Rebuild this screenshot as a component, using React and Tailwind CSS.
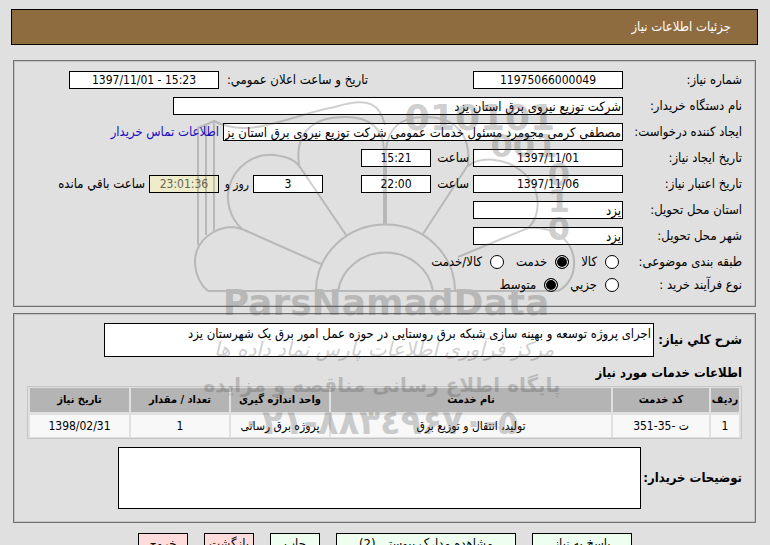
import { useState } from "react";

const FIELD =
  "h-[18px] shrink-0 border border-black bg-white px-px leading-4 outline-none";

const PANEL =
  "mr-[14px] ml-[13px] border border-[#707070] px-[13px] shadow-[inset_0_0_0_1px_#c4c4c4]";

const columns = [
  { title: "ردیف", width: "w-[28px]" },
  { title: "کد خدمت", width: "w-[96px]" },
  { title: "نام خدمت", width: "" },
  { title: "واحد اندازه گیری", width: "w-[98px]" },
  { title: "تعداد / مقدار", width: "w-[98px]" },
  { title: "تاریخ نیاز", width: "w-[99px]" },
];

const services = [
  ["1", "ت -35-351", "تولید، انتقال و توزیع برق", "پروژه برق رسانی", "1", "1398/02/31"],
];

const actions = [
  { title: "پاسخ به نیاز", style: "w-[100px] bg-[#efffef]" },
  { title: "مشاهده مدارک پیوستی (2)", style: "w-[180px] bg-[#efffef]" },
  { title: "چاپ", style: "w-[50px] bg-[#efffef]" },
  { title: "بازگشت", style: "w-[50px] bg-[#ffdcdc]" },
  { title: "خروج", style: "w-[50px] bg-[#ffdcdc]" },
];

// One line of the form, label on the right
function Row({ id, label, children }) {
  return (
    <div className="flex h-[18px] items-center">
      <label htmlFor={id} className="w-[119px] shrink-0 whitespace-nowrap">
        {label}
      </label>
      {children}
    </div>
  );
}

function Radio({ name, label, value, selected, onChange }) {
  return (
    <label className="flex items-center gap-1 whitespace-nowrap">
      <input
        type="radio"
        name={name}
        checked={selected === value}
        onChange={() => onChange(value)}
        className="me-1 size-[14px] appearance-none rounded-full border border-black bg-white checked:bg-black checked:shadow-[inset_0_0_0_1px_white]"
      />
      {label}
    </label>
  );
}

// Logo printed across the page
function Watermark() {
  return (
    <svg
      viewBox="0 0 400 370"
      aria-hidden="true"
      className="pointer-events-none absolute top-[90px] left-1/2 w-[400px] -translate-x-1/2 opacity-25"
    >
      <g transform="translate(5 0)">
        <g fill="none" stroke="#444" strokeWidth="2">
          <path d="M18 201H368" />
          <path d="M126 201a69 66 0 0 1 139 0M148 201a48 45 0 0 1 95 0" />
          <path d="M18 201C5 190 5 176 5 170C6 150 25 137 43 137L52 139L131 174" />
          <path d="M52 139C39 127 36 110 39 98C44 76 65 63 84 65C99 67 106 70 112 80L156 145" />
          <path d="M109 75C105 45 120 27 155 27C180 27 193 38 194 60V135" />
          <path d="M196 135V60C198 38 210 27 235 27C266 27 281 45 278 75L233 144" />
          <path d="M278 76C290 66 315 68 330 80C352 96 352 126 338 138" />
          <path d="M268 167L338 138C365 136 382 150 384 170C385 185 378 196 368 201" />
          <path d="M8 155V38L24 31V141M16 145V35M24 31C60 50 100 25 145 17C180 6 190 15 195 35" />
        </g>
        <g fill="#444" fontFamily="DejaVu Sans" fontWeight="bold" textAnchor="middle" direction="ltr">
          <text x="290" y="40" fontSize="36">010101</text>
          <text x="334" y="67" fontSize="32">001</text>
          <text x="369" y="96" fontSize="32">0</text>
          <text x="369" y="122" fontSize="32">1</text>
          <text x="369" y="150" fontSize="32">0</text>
          <text x="196" y="225" fontSize="36">ParsNamadData</text>
        </g>
        <g fill="#444" fontFamily="DejaVu Sans" textAnchor="middle" direction="rtl">
          <text x="194" y="266" fontSize="20" fontStyle="italic">مرکز فرآوری اطلاعات پارس نماد داده ها</text>
          <text x="192" y="302" fontSize="20" fontWeight="bold">پایگاه اطلاع رسانی مناقصه و مزایده</text>
          <text x="190" y="344" fontSize="34" fontWeight="bold" direction="ltr">۰۲۱-۸۸۳٤۹۶۷۰-۵</text>
        </g>
      </g>
    </svg>
  );
}

function App() {
  const [category, setCategory] = useState("service");
  const [process, setProcess] = useState("medium");

  return (
    <div
      dir="rtl"
      className="relative min-h-screen overflow-hidden bg-[#e0e0e0] pt-[9px] font-['DejaVu_Sans_Condensed','DejaVu_Sans',sans-serif] text-[13px] leading-4 text-black"
    >
      <h1 className="mr-3 ml-[11px] flex h-9 items-center border border-black bg-[#8f6c40] px-[26px] text-white">
        جزئیات اطلاعات نیاز
      </h1>

      {/* Need info */}
      <section className={`${PANEL} mt-[15px] flex flex-col gap-2 pt-[10px] pb-3`}>
        <Row id="number" label="شماره نیاز:">
          <input id="number" readOnly defaultValue="11975066000049" className={`${FIELD} w-[150px] text-center text-[12px]`} />
          <label htmlFor="announced" className="ms-[105px] w-[149px] whitespace-nowrap">
            تاریخ و ساعت اعلان عمومي:
          </label>
          <input id="announced" dir="ltr" readOnly defaultValue="1397/11/01 - 15:23" className={`${FIELD} w-[150px] text-center text-[12px]`} />
        </Row>
        <Row id="buyer" label="نام دستگاه خریدار:">
          <input id="buyer" readOnly defaultValue="شرکت توزیع نیروی برق استان یزد" className={`${FIELD} w-[450px]`} />
        </Row>
        <Row id="creator" label="ایجاد کننده درخواست:">
          <input
            id="creator"
            readOnly
            defaultValue="مصطفی کرمی مجومرد مسئول خدمات عمومی شرکت توزیع نیروی برق استان یزد"
            className={`${FIELD} w-[400px]`}
          />
          <a href="#contact" className="ms-1 whitespace-nowrap text-[#1a0dc0]">
            اطلاعات تماس خریدار
          </a>
        </Row>
        <Row id="created" label="تاریخ ایجاد نیاز:">
          <input id="created" readOnly defaultValue="1397/11/01" className={`${FIELD} w-[150px] text-center text-[12px]`} />
          <label htmlFor="createdTime" className="w-[42px] px-1">ساعت</label>
          <input id="createdTime" readOnly defaultValue="15:21" className={`${FIELD} w-[70px] text-center text-[12px]`} />
        </Row>
        <Row id="expires" label="تاریخ اعتبار نیاز:">
          <input id="expires" readOnly defaultValue="1397/11/06" className={`${FIELD} w-[150px] text-center text-[12px]`} />
          <label htmlFor="expiresTime" className="w-[42px] px-1">ساعت</label>
          <input id="expiresTime" readOnly defaultValue="22:00" className={`${FIELD} w-[70px] text-center text-[12px]`} />
          <input id="days" readOnly defaultValue="3" className={`${FIELD} ms-[38px] w-[70px] text-center text-[12px]`} />
          <label htmlFor="days" className="w-[34px] px-1 text-[12px] whitespace-nowrap">روز و</label>
          <input
            id="remaining"
            readOnly
            defaultValue="23:01:36"
            className="h-[18px] w-[70px] border border-black bg-[#efeccb] text-center text-[12px] leading-4 text-[#666650] outline-none"
          />
          <label htmlFor="remaining" className="px-1 whitespace-nowrap">ساعت باقي مانده</label>
        </Row>
        <Row id="province" label="استان محل تحویل:">
          <input id="province" readOnly defaultValue="یزد" className={`${FIELD} w-[150px]`} />
        </Row>
        <Row id="city" label="شهر محل تحویل:">
          <input id="city" readOnly defaultValue="یزد" className={`${FIELD} w-[150px]`} />
        </Row>
        <div className="flex flex-col gap-[5px]">
          <div role="radiogroup" aria-labelledby="category" className="flex h-[18px] items-center">
            <span id="category" className="w-[123px] whitespace-nowrap">طبقه بندی موضوعی:</span>
            <div className="flex gap-3">
              <Radio name="category" label="کالا" value="goods" selected={category} onChange={setCategory} />
              <Radio name="category" label="خدمت" value="service" selected={category} onChange={setCategory} />
              <Radio name="category" label="کالا/خدمت" value="both" selected={category} onChange={setCategory} />
            </div>
          </div>
          <div role="radiogroup" aria-labelledby="process" className="flex h-[18px] items-center">
            <span id="process" className="w-[123px] whitespace-nowrap">نوع فرآیند خرید :</span>
            <div className="flex gap-3">
              <Radio name="process" label="جزیي" value="small" selected={process} onChange={setProcess} />
              <Radio name="process" label="متوسط" value="medium" selected={process} onChange={setProcess} />
            </div>
          </div>
        </div>
      </section>

      {/* Description and services */}
      <section className={`${PANEL} mt-[6px] pt-[9px] pb-[13px]`}>
        <div className="flex items-center">
          <label htmlFor="summary" className="w-[88px] font-bold whitespace-nowrap">
            شرح كلي نیاز:
          </label>
          <textarea
            id="summary"
            readOnly
            defaultValue="اجرای پروژه توسعه و بهینه سازی شبکه برق روستایی در حوزه عمل امور برق یک شهرستان یزد"
            className="h-[34px] w-[550px] resize-none border border-black bg-white px-[2px] py-[2px] leading-4 outline-none"
          />
        </div>
        <h2 className="mt-2 font-bold">اطلاعات خدمات مورد نیاز</h2>
        <table className="mt-[5px] w-full table-fixed border-separate border-spacing-x-[2px] border-spacing-y-[1px] border border-[#c4c4c4] text-center text-[11px]">
          <thead>
            <tr>
              {columns.map((column) => (
                <th key={column.title} className={`h-6 bg-[#b4b4b4] font-bold whitespace-nowrap ${column.width}`}>
                  {column.title}
                </th>
              ))}
            </tr>
          </thead>
          <tbody>
            {services.map((service) => (
              <tr key={service[1]}>
                {service.map((cell, i) => (
                  <td key={i} className="h-6 border-t-2 border-[#e0e0e0] bg-[#f8f8f8] text-[12px] whitespace-nowrap">
                    {cell}
                  </td>
                ))}
              </tr>
            ))}
          </tbody>
        </table>
        <div className="mt-2 flex items-center">
          <label htmlFor="notes" className="w-[101px] font-bold whitespace-nowrap">
            توضیحات خریدار:
          </label>
          <textarea id="notes" readOnly className="h-[62px] w-[523px] resize-none border border-black bg-white outline-none" />
        </div>
      </section>

      <div className="mt-[10px] flex justify-center gap-4">
        {actions.map((action) => (
          <button
            key={action.title}
            type="button"
            className={`h-[22px] border border-black leading-4 whitespace-nowrap ${action.style}`}
          >
            {action.title}
          </button>
        ))}
      </div>

      <Watermark />
    </div>
  );
}

export default App;
